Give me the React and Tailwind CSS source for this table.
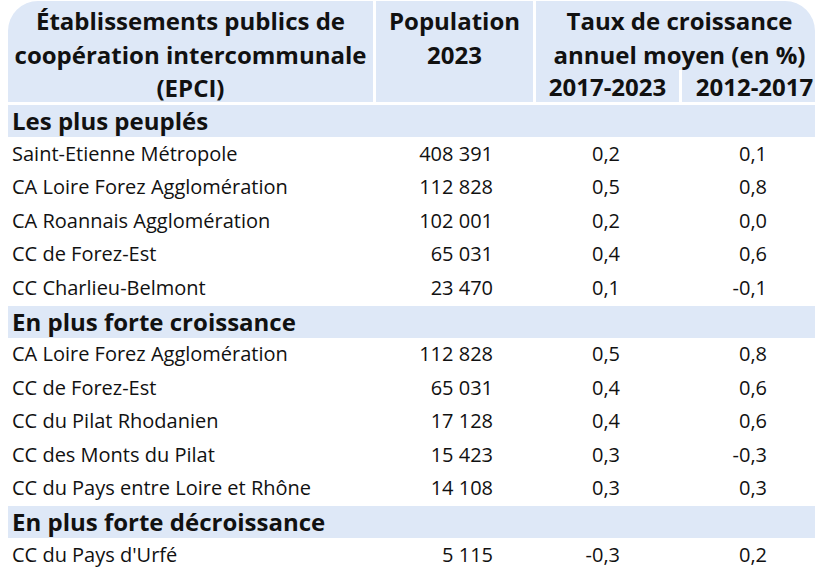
import React from "react";

const sections = [
  {
    title: "Les plus peuplés",
    rows: [
      ["Saint-Etienne Métropole", "408 391", "0,2", "0,1"],
      ["CA Loire Forez Agglomération", "112 828", "0,5", "0,8"],
      ["CA Roannais Agglomération", "102 001", "0,2", "0,0"],
      ["CC de Forez-Est", "65 031", "0,4", "0,6"],
      ["CC Charlieu-Belmont", "23 470", "0,1", "-0,1"],
    ],
  },
  {
    title: "En plus forte croissance",
    rows: [
      ["CA Loire Forez Agglomération", "112 828", "0,5", "0,8"],
      ["CC de Forez-Est", "65 031", "0,4", "0,6"],
      ["CC du Pilat Rhodanien", "17 128", "0,4", "0,6"],
      ["CC des Monts du Pilat", "15 423", "0,3", "-0,3"],
      ["CC du Pays entre Loire et Rhône", "14 108", "0,3", "0,3"],
    ],
  },
  {
    title: "En plus forte décroissance",
    rows: [["CC du Pays d'Urfé", "5 115", "-0,3", "0,2"]],
  },
];

const Section = ({ title, rows }) => (
  <div>
    <div className="h-[32px] bg-[#dee8f7] pl-[4px] flex items-center text-[24px] font-bold">
      {title}
    </div>
    {rows.map((r, i) => (
      <div key={i} className="h-[33.5px] flex items-center text-[20px]">
        <div className="w-[368px] pl-[4px] whitespace-nowrap">{r[0]}</div>
        <div className="w-[157px] text-right pr-[40px]">{r[1]}</div>
        <div className="w-[146px] text-right pr-[59px]">{r[2]}</div>
        <div className="w-[136px] text-right pr-[48px]">{r[3]}</div>
      </div>
    ))}
  </div>
);

export default function App() {
  return (
    <div className="w-[820px] h-[573px] bg-white overflow-hidden text-[#111] font-['Open_Sans',sans-serif]">
      <div className="ml-[8px] w-[807px] pt-[1px]">
        <div className="flex h-[101px] gap-[3px] text-[24px] font-bold leading-[33.5px] text-center">
          <div className="w-[365px] bg-[#dee8f7] rounded-tl-[30px] pt-[3px] whitespace-nowrap">
            Établissements publics de
            <br />
            coopération intercommunale
            <br />
            (EPCI)
          </div>
          <div className="w-[157px] bg-[#dee8f7] pt-[3px]">
            Population
            <br />
            2023
          </div>
          <div className="flex-1 bg-[#dee8f7] rounded-tr-[30px] flex flex-col">
            <div className="h-[69px] pt-[3px] pl-[8px] whitespace-nowrap">
              Taux de croissance
              <br />
              annuel moyen (en %)
            </div>
            <div className="flex flex-1">
              <div className="w-[143px] flex items-center justify-center whitespace-nowrap">2017-2023</div>
              <div className="flex-1 border-l-[3px] border-white flex items-center justify-center pl-[12px] whitespace-nowrap">
                2012-2017
              </div>
            </div>
          </div>
        </div>
        <div className="h-[3px]" />
        {sections.map((s, i) => (
          <div key={i} className={i > 0 ? "mt-[1px]" : ""}>
            <Section title={s.title} rows={s.rows} />
          </div>
        ))}
      </div>
    </div>
  );
}
